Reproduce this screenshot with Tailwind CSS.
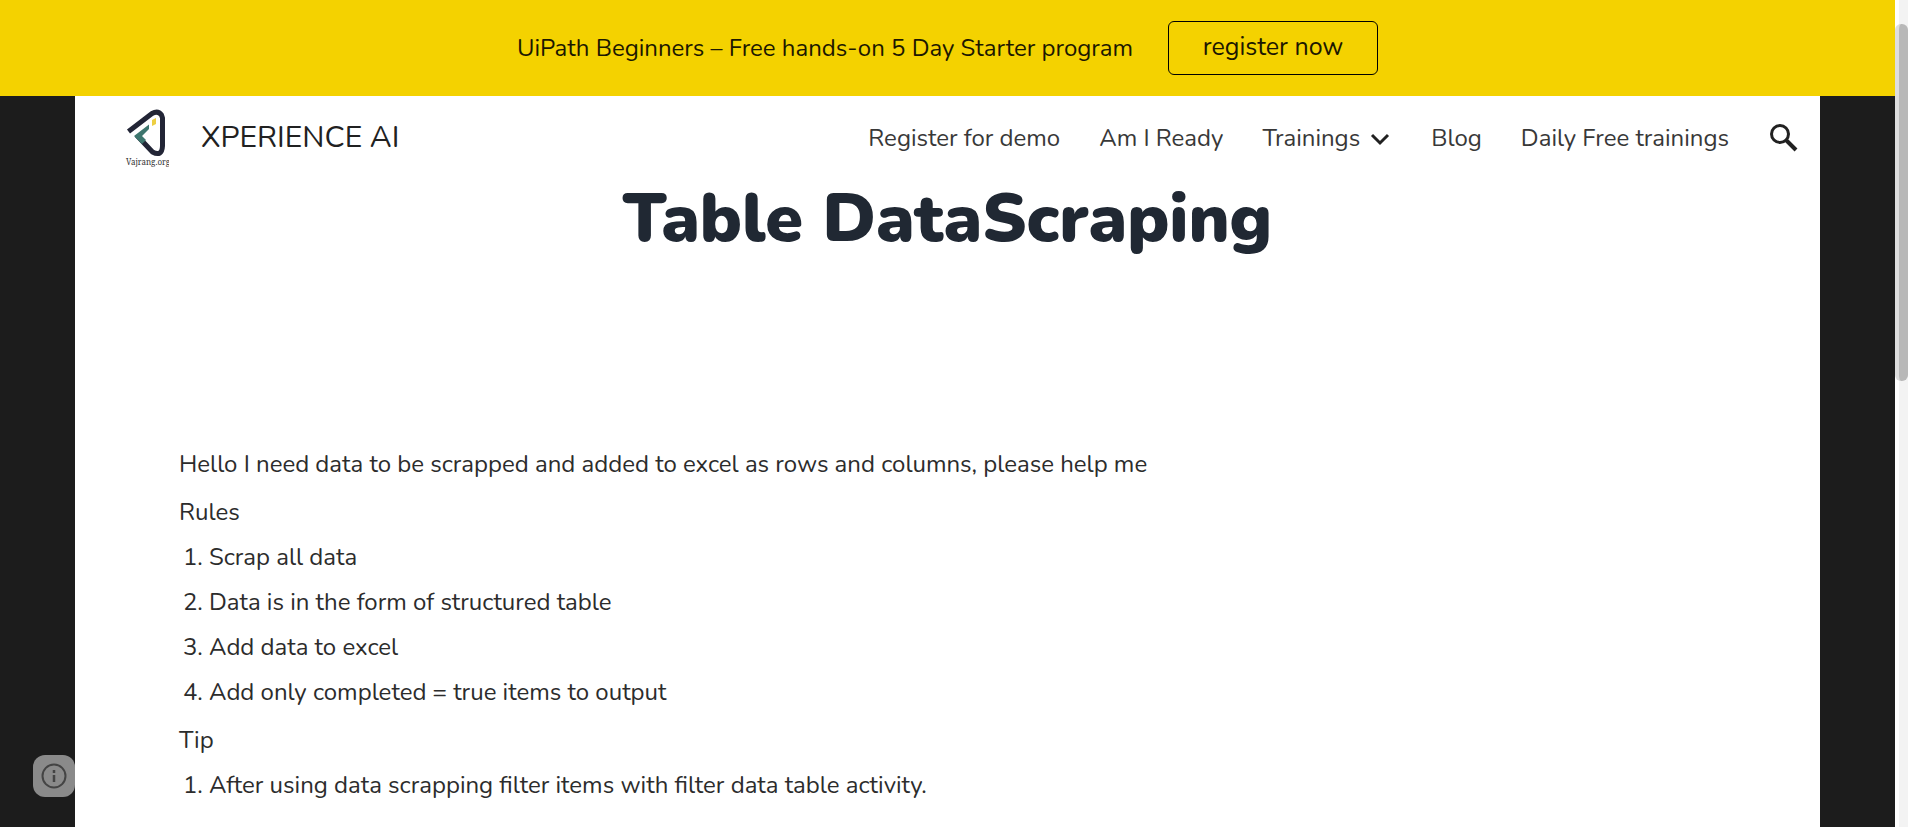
<!DOCTYPE html>
<html lang="en">
<head>
<meta charset="utf-8">
<meta name="viewport" content="width=device-width, initial-scale=1">
<title>Table DataScraping</title>
<script src="https://cdn.jsdelivr.net/npm/@tailwindcss/browser@4"></script>
</head>
<body class="flex h-screen overflow-hidden bg-[#1c1c1c] font-['Nunito','Open_Sans',sans-serif] text-2xl font-normal text-[#212121]">
<div class="flex min-w-0 flex-1 flex-col">
  <aside class="flex h-24 shrink-0 items-center justify-center gap-[35px] bg-[#f4d200] text-[#1c1800]">
    <p>UiPath Beginners – Free hands-on 5 Day Starter program</p>
    <a href="#" class="flex h-[54px] w-[210px] items-center justify-center rounded-md border border-black text-[25px]">register now</a>
  </aside>
  <div class="mx-[75px] flex-1 bg-white">
    <header class="flex h-20 items-center justify-between pl-[50px] pr-5">
      <a href="#" class="flex items-center gap-8">
        <svg class="h-[62px] w-11" viewBox="0 0 44 62" fill="none" aria-label="Vajrang.org">
          <path d="M3.500 26.500 27 8.500Q33 5 36.500 10L37.500 13V41Q37 52 27.500 47L12 30.500" stroke="#222536" stroke-width="5" stroke-linejoin="round"/>
          <path d="M9 31 24 19.500V24L17 31 21 35 17 39Z" fill="#3d766e"/>
          <path d="m27 15 4-2v6l-4 2Z" fill="#edcf43"/>
          <text x="1" y="60" font-family="Noto Serif, Liberation Serif" font-size="8" font-weight="400" fill="#333">Vajrang.org</text>
        </svg>
        <span class="pt-1 text-[30px] leading-10">XPERIENCE AI</span>
      </a>
      <nav class="flex items-center gap-[39px] pt-1 text-[#383838]" aria-label="Main">
        <a href="#">Register for demo</a>
        <a href="#">Am I Ready</a>
        <button type="button" class="flex items-center gap-2">Trainings
          <svg class="size-6" viewBox="0 0 24 24" fill="none" stroke="#212121" stroke-width="3"><path d="m4 9 8 8 8-8"/></svg>
        </button>
        <a href="#">Blog</a>
        <a href="#">Daily Free trainings</a>
        <button type="button" aria-label="Search"><svg class="size-8" viewBox="0 0 32 32" fill="none" stroke="#212121" stroke-width="3"><circle cx="12" cy="12" r="8.5"/><path d="m18 18 10 10" stroke-width="4"/></svg></button>
      </nav>
    </header>
    <main>
      <h1 class="text-center text-[68px] leading-[86px] font-black text-[#202833]">Table DataScraping</h1>
      <div class="ml-[104px] mt-[184px] leading-[37px] text-[#2c2c2c]">
        <p>Hello I need data to be scrapped and added to excel as rows and columns, please help me</p>
        <p class="mt-[11px]">Rules</p>
        <ol class="mt-2 list-decimal space-y-2 pl-[30px]">
          <li>Scrap all data</li>
          <li>Data is in the form of structured table</li>
          <li>Add data to excel</li>
          <li>Add only completed = true items to output</li>
        </ol>
        <p class="mt-[11px]">Tip</p>
        <ol class="mt-2 list-decimal space-y-2 pl-[30px]">
          <li>After using data scrapping filter items with filter data table activity.</li>
        </ol>
      </div>
    </main>
  </div>
</div>
<div class="flex w-[13px] shrink-0 flex-col border-l-4 border-white bg-[#f3f3f3] pt-6" aria-hidden="true">
  <div class="-ml-1 h-[357px] rounded-md border-l-4 border-[#dedede] bg-[#b8b8b8]"></div>
</div>
<button type="button" aria-label="Site information" class="fixed bottom-[30px] left-[33px] flex size-[42px] items-center justify-center rounded-xl bg-[#8a8a8a]">
  <svg class="size-[26px]" viewBox="0 0 26 26" fill="none" stroke="#444" stroke-width="2"><circle cx="13" cy="13" r="11.5"/><path d="M13 12v7M13 7v3" stroke-width="2.5"/></svg>
</button>
</body>
</html>
